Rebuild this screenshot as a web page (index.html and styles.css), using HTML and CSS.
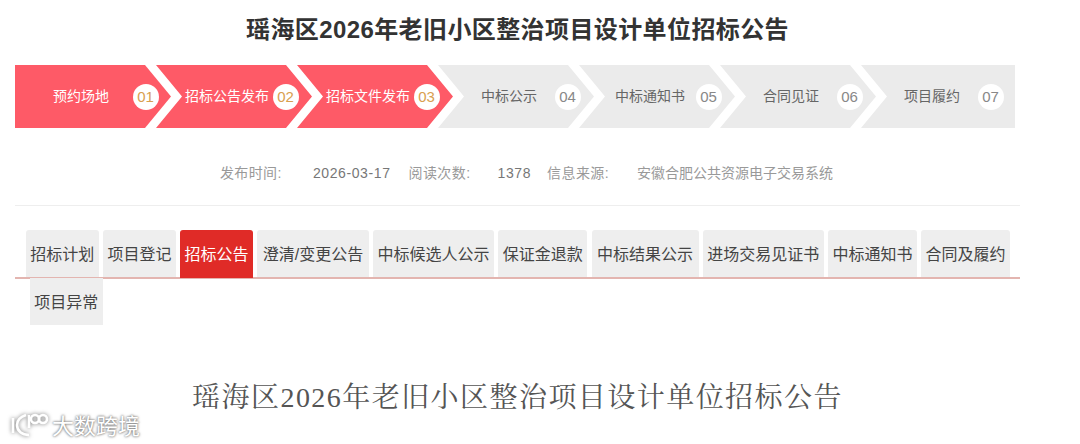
FILE: index.html
```html
<!DOCTYPE html>
<html lang="zh-CN">
<head>
    <meta charset="UTF-8">
    <title>招标公告</title>
    <link rel="stylesheet" href="styles.css">
</head>
<body>
    <div class="container">
        <h1 class="title">瑶海区2026年老旧小区整治项目设计单位招标公告</h1>
        <div class="steps">
            <div class="step active"><span>预约场地</span><i>01</i></div>
            <div class="step active"><span>招标公告发布</span><i>02</i></div>
            <div class="step active"><span>招标文件发布</span><i>03</i></div>
            <div class="step"><span>中标公示</span><i>04</i></div>
            <div class="step"><span>中标通知书</span><i>05</i></div>
            <div class="step"><span>合同见证</span><i>06</i></div>
            <div class="step"><span>项目履约</span><i>07</i></div>
        </div>
        <div class="meta">
            <span class="meta-label">发布时间:</span><span class="meta-date">2026-03-17</span>
            <span class="meta-label short">阅读次数:</span><span class="meta-count">1378</span>
            <span class="meta-label source">信息来源:</span><span>安徽合肥公共资源电子交易系统</span>
        </div>
        <div class="tabs">
            <a class="tab">招标计划</a>
            <a class="tab">项目登记</a>
            <a class="tab current">招标公告</a>
            <a class="tab wide">澄清/变更公告</a>
            <a class="tab">中标候选人公示</a>
            <a class="tab">保证金退款</a>
            <a class="tab wide">中标结果公示</a>
            <a class="tab">进场交易见证书</a>
            <a class="tab">中标通知书</a>
            <a class="tab">合同及履约</a>
            <a class="tab extra">项目异常</a>
        </div>
        <h2 class="doc-title">瑶海区2026年老旧小区整治项目设计单位招标公告</h2>
    </div>
    <div class="watermark">
        <svg class="wm-logo" width="40" height="30" viewBox="0 0 40 30" fill="none" stroke="#fff" stroke-width="2.6">
            <path d="M4 8v15"/>
            <path d="M17 5c-6 2-9 6-9 10 0 6 5 10 12 10"/>
            <path d="M20 5v13"/>
            <circle cx="26" cy="9" r="4"/>
            <circle cx="34" cy="9" r="4"/>
        </svg>
        <span class="wm-text">大数跨境</span>
    </div>
</body>
</html>
```

FILE: styles.css
```css
* {
    box-sizing: border-box;
}
html, body {
    height: 444px;
    overflow: hidden;
}
body {
    margin: 0;
    background-color: #fff;
    font-family: "Liberation Sans", "Noto Sans CJK SC", sans-serif;
    color: #333;
}
.container {
    width: 1005px;
    margin-left: 15px;
}
.title {
    margin: 0;
    padding-top: 15px;
    height: 65px;
    line-height: 30px;
    font-size: 24px;
    font-weight: bold;
    text-align: center;
    color: #333;
    letter-spacing: 0.4px;
}
.steps {
    display: flex;
    width: 1000px;
    height: 63px;
}
.step {
    flex: 0 0 156px;
    height: 63px;
    margin-left: -15px;
    padding-left: 28px;
    display: flex;
    align-items: center;
    font-size: 14px;
    color: #666;
    background-color: #ebebeb;
    clip-path: polygon(0 0, 130px 0, 100% 50%, 130px 100%, 0 100%, 26px 50%);
}
.step span {
    width: 86px;
    margin-top: -3px;
    text-align: center;
    white-space: nowrap;
}
.step i {
    width: 26px;
    height: 26px;
    margin-left: 2.5px;
    line-height: 26px;
    border-radius: 50%;
    background-color: #fff;
    color: #888;
    text-align: center;
    font-style: normal;
    font-size: 15px;
}
.step:first-child {
    margin-left: 0;
    padding-left: 23px;
    clip-path: polygon(0 0, 130px 0, 100% 50%, 130px 100%, 0 100%);
}
.step:first-child i {
    margin-left: 8.5px;
}
.step:last-child {
    flex-basis: 154px;
    clip-path: polygon(0 0, 100% 0, 100% 100%, 0 100%, 26px 50%);
}
.step.active {
    background-color: #fe5a67;
    color: #fff;
}
.step.active i {
    color: #d9a050;
}
.meta {
    display: flex;
    justify-content: center;
    margin-top: 36px;
    padding-left: 18px;
    height: 42px;
    line-height: 18px;
    font-size: 14px;
    color: #999;
    border-bottom: 1px solid #eee;
}
.meta-label {
    letter-spacing: 0.4px;
    width: 93px;
}
.meta-label.short {
    width: 89px;
}
.meta-label.source {
    width: 90px;
}
.meta-date, .meta-count {
    margin-right: 18px;
    color: #777;
    letter-spacing: 0.6px;
}
.meta-count {
    margin-right: 16px;
}
.tabs {
    display: flex;
    flex-wrap: wrap;
    margin-top: 24px;
    padding-left: 11px;
    gap: 0 4.5px;
    position: relative;
}
.tabs::after {
    content: "";
    position: absolute;
    left: 0;
    right: 0;
    top: 47px;
    height: 2px;
    background-color: #e3b5b0;
}
.tab {
    height: 48px;
    line-height: 49px;
    padding: 0 4.3px;
    font-size: 16px;
    color: #444;
    background-color: #eee;
    border-radius: 3px 3px 0 0;
}
.tab.wide {
    padding: 0 5.5px;
}
.tab.current {
    background-color: #e02b27;
    color: #fff;
    position: relative;
    z-index: 1;
}
.tab.extra {
    margin-left: 4px;
    height: 47px;
    position: relative;
    z-index: 1;
    border-radius: 0;
}
.doc-title {
    margin: 53px 0 0;
    font-family: "Liberation Serif", "Noto Serif CJK SC", "Noto Sans CJK SC", serif;
    font-size: 28px;
    font-weight: normal;
    line-height: 40px;
    text-align: center;
    color: #555;
    letter-spacing: 1.45px;
}
.watermark {
    position: absolute;
    left: 9px;
    top: 407px;
    display: flex;
    align-items: center;
    gap: 3px;
    font-size: 22px;
    line-height: 30px;
    color: #fff;
    text-shadow: 0 0 3px #777, 0 0 2px #888;
}
.wm-text {
    margin-top: 5px;
}
.wm-logo {
    filter: drop-shadow(0 0 2px #777);
}
```
